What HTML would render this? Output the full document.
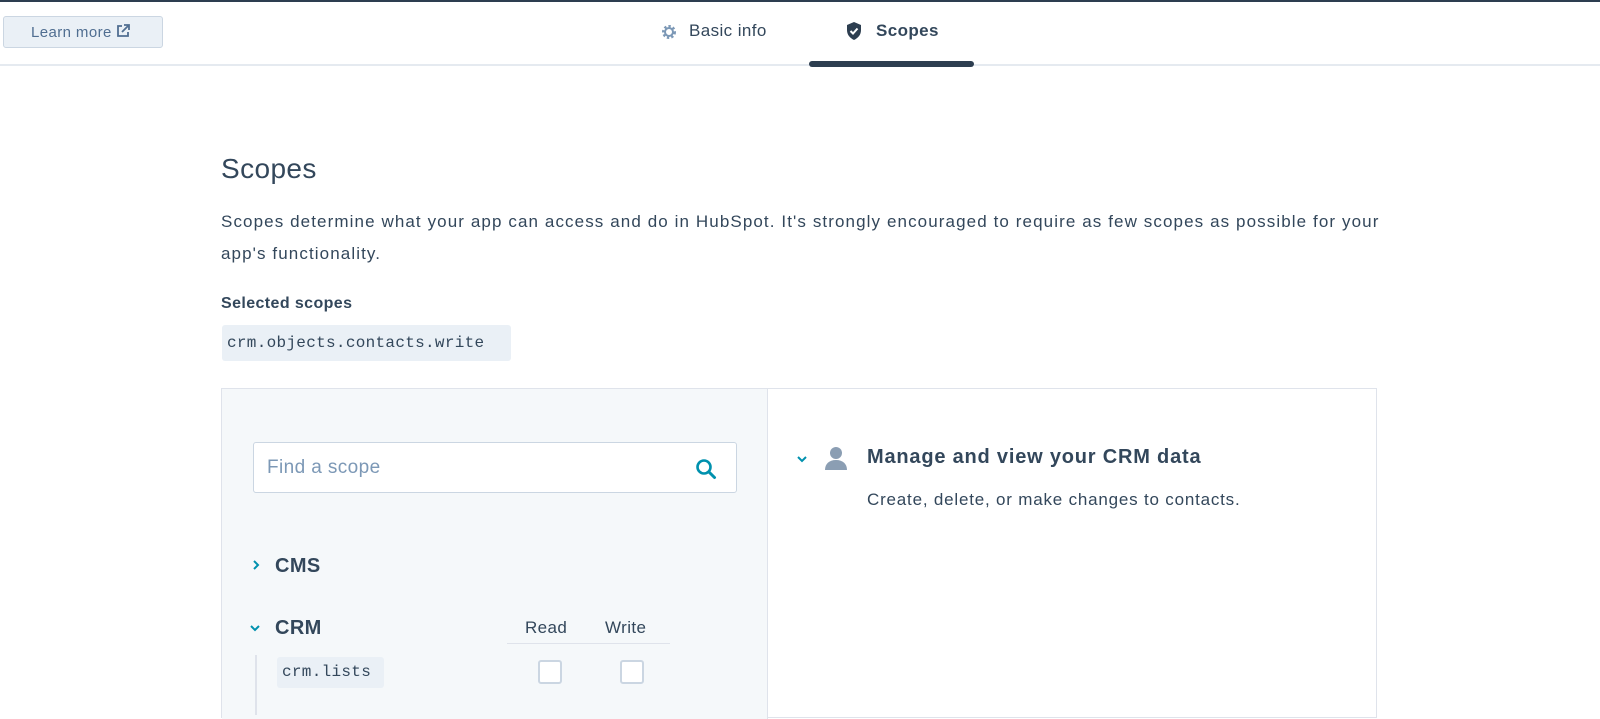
<!DOCTYPE html>
<html><head><style>
*{box-sizing:border-box;margin:0;padding:0}
body{width:1600px;height:707px;overflow:hidden;background:#fff;font-family:"Liberation Sans",sans-serif;color:#33475b;position:relative;letter-spacing:0.4px}
.a{position:absolute}
.mono{font-family:"Liberation Mono",monospace;letter-spacing:0.3px}
</style></head><body>
<div class="a" style="left:0;top:0;width:1600px;height:2px;background:#2d3e50"></div>
<div class="a" style="left:0;top:64px;width:1600px;height:2px;background:#e5eaf0"></div>
<div class="a" style="left:3px;top:16px;width:160px;height:32px;background:#eaf0f6;border:1px solid #cbd6e2;border-radius:3px;font-size:15px;color:#506e91;padding:7px 0 0 27px">Learn more
<svg width="14" height="14" viewBox="0 0 14 14" style="vertical-align:-1px"><path d="M6 2H2v10h10V8" fill="none" stroke="#506e91" stroke-width="1.8"/><path d="M8 1h5v5M13 1L6 8" fill="none" stroke="#506e91" stroke-width="1.8"/></svg></div>
<svg class="a" style="left:660px;top:23px" width="18" height="18" viewBox="0 0 18 18"><circle cx="9" cy="9" r="5.5" fill="none" stroke="#7c98b6" stroke-width="3" stroke-dasharray="2.2 2"/><circle cx="9" cy="9" r="4" fill="none" stroke="#7c98b6" stroke-width="2"/></svg>
<div class="a" style="left:689px;top:21px;font-size:17px">Basic info</div>
<svg class="a" style="left:845px;top:21px" width="18" height="20" viewBox="0 0 18 20"><path d="M9 1L2 4v5c0 5 3 8 7 10 4-2 7-5 7-10V4z" fill="#2d3e50"/><path d="M5.5 10l2.5 2.5 4.5-5" fill="none" stroke="#fff" stroke-width="2"/></svg>
<div class="a" style="left:876px;top:21px;font-size:17px;font-weight:bold">Scopes</div>
<div class="a" style="left:809px;top:61px;width:165px;height:6px;background:#2d3e50;border-radius:3px"></div>

<div class="a" style="left:221px;top:153px;font-size:28px">Scopes</div>
<div class="a" style="left:221px;top:206px;width:1160px;font-size:17px;line-height:32px;letter-spacing:1.1px">Scopes determine what your app can access and do in HubSpot. It's strongly encouraged to require as few scopes as possible for your app's functionality.</div>
<div class="a" style="left:221px;top:295px;font-size:16px;font-weight:bold">Selected scopes</div>
<div class="a mono" style="left:222px;top:325px;width:289px;height:36px;background:#eaf0f6;border-radius:3px;font-size:16px;padding:9px 0 0 5px">crm.objects.contacts.write</div>

<div class="a" style="left:221px;top:388px;width:1156px;height:330px;border:1px solid #dfe3eb"></div>
<div class="a" style="left:222px;top:389px;width:546px;height:330px;background:#f5f8fa;border-right:1px solid #dfe3eb"></div>
<div class="a" style="left:253px;top:442px;width:484px;height:51px;background:#fff;border:1px solid #cbd6e2;border-radius:3px;font-size:19px;color:#7c98b6;padding:14px 0 0 13px">Find a scope</div>
<svg class="a" style="left:695px;top:458px" width="22" height="22" viewBox="0 0 22 22"><circle cx="9" cy="9" r="6.5" fill="none" stroke="#0091ae" stroke-width="2.6"/><path d="M14 14l5.5 5.5" stroke="#0091ae" stroke-width="3" stroke-linecap="round"/></svg>
<svg class="a" style="left:251px;top:559px" width="10" height="12" viewBox="0 0 10 12"><path d="M3 2l4 4-4 4" fill="none" stroke="#0091ae" stroke-width="2"/></svg>
<div class="a" style="left:275px;top:555px;font-size:20px;font-weight:bold">CMS</div>
<svg class="a" style="left:248px;top:623px" width="14" height="10" viewBox="0 0 14 10"><path d="M3 3l4 4 4-4" fill="none" stroke="#0091ae" stroke-width="2"/></svg>
<div class="a" style="left:275px;top:617px;font-size:20px;font-weight:bold">CRM</div>
<div class="a" style="left:525px;top:618px;font-size:17px">Read</div>
<div class="a" style="left:605px;top:618px;font-size:17px">Write</div>
<div class="a" style="left:507px;top:643px;width:163px;height:1px;background:#dfe3eb"></div>
<div class="a" style="left:255px;top:655px;width:2px;height:60px;background:#dfe3eb"></div>
<div class="a mono" style="left:277px;top:657px;width:107px;height:31px;background:#eaf0f6;border-radius:3px;font-size:16px;padding:6px 0 0 5px">crm.lists</div>
<div class="a" style="left:538px;top:660px;width:24px;height:24px;background:#fff;border:2px solid #cbd6e2;border-radius:3px"></div>
<div class="a" style="left:620px;top:660px;width:24px;height:24px;background:#fff;border:2px solid #cbd6e2;border-radius:3px"></div>

<svg class="a" style="left:795px;top:454px" width="14" height="10" viewBox="0 0 14 10"><path d="M3 3l4 4 4-4" fill="none" stroke="#0091ae" stroke-width="2"/></svg>
<svg class="a" style="left:823px;top:445px" width="26" height="26" viewBox="0 0 26 26"><circle cx="13" cy="8" r="6" fill="#8b9eb3"/><path d="M2 25c0-6 4-10 11-10s11 4 11 10z" fill="#8b9eb3"/></svg>
<div class="a" style="left:867px;top:446px;font-size:20px;font-weight:bold;letter-spacing:0.8px">Manage and view your CRM data</div>
<div class="a" style="left:867px;top:490px;font-size:17px;letter-spacing:0.8px">Create, delete, or make changes to contacts.</div>
</body></html>
